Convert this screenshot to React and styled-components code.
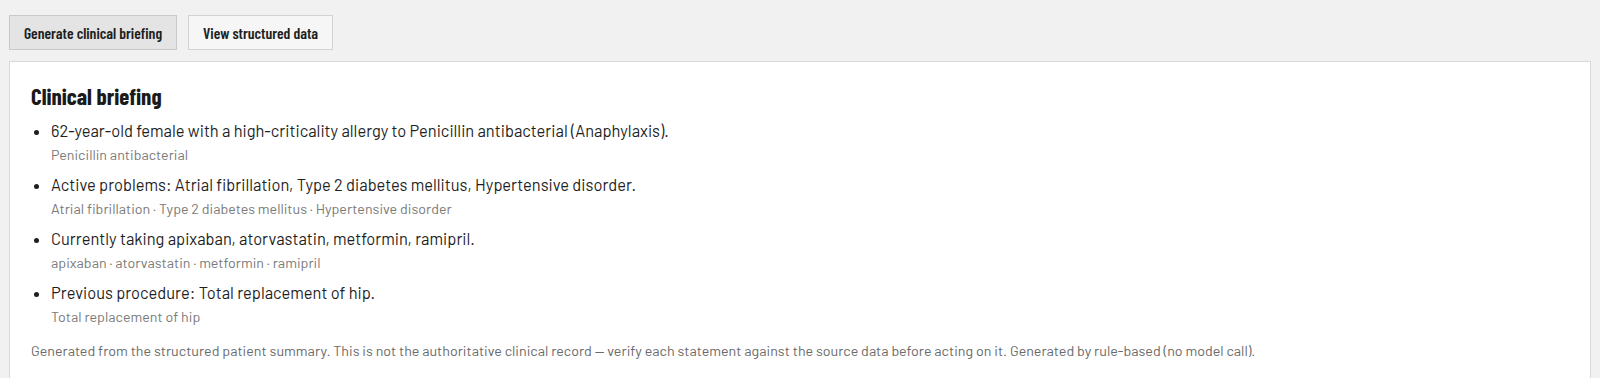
import React from "react";
import styled, { createGlobalStyle } from "styled-components";

const GlobalStyle = createGlobalStyle`
  html, body { margin: 0; padding: 0; background: #f1f1f1; }
  body { font-family: Barlow, "Liberation Sans", sans-serif; color: #1f1f1f; }
`;

const Page = styled.div`
  padding: 15px 9px 0;
  display: flex;
  flex-direction: column;
  gap: 11px;
`;

const Toolbar = styled.div`
  display: flex;
  gap: 11px;
`;

const Button = styled.button`
  height: 35px;
  padding: 0 14px;
  font-family: "Barlow Condensed", Barlow, sans-serif;
  font-weight: 600;
  font-size: 15.5px;
  color: #1e1e1e;
  background: ${p => (p.$active ? "#e4e4e4" : "#f6f6f6")};
  border: 1px solid ${p => (p.$active ? "#c9c9c9" : "#d3d3d3")};
  border-radius: 0;
  cursor: pointer;
`;

const Panel = styled.section`
  background: #fff;
  border: 1px solid #d9d9d9;
  padding: 20px 21px 20px;
`;

const Heading = styled.h2`
  margin: 0 0 9px;
  font-family: "Barlow Condensed", Barlow, sans-serif;
  font-weight: 700;
  font-size: 23px;
  line-height: 28px;
  color: #1a1a1a;
`;

const List = styled.ul`
  margin: 0;
  padding: 0 0 0 20px;
  list-style: disc;
`;

const Item = styled.li`
  margin-bottom: 8px;
  &:last-child { margin-bottom: 0; }
`;

const Statement = styled.div`
  font-size: 16.45px;
  line-height: 24px;
  color: #1f1f1f;
`;

const Sources = styled.div`
  margin-top: 2px;
  font-size: 14.25px;
  line-height: 20px;
  color: #7a7a7a;
`;

const Footnote = styled.p`
  margin: 14px 0 0;
  font-size: 14.25px;
  line-height: 20px;
  color: #6a6a6a;
`;

const items = [
  {
    text: "62-year-old female with a high-criticality allergy to Penicillin antibacterial (Anaphylaxis).",
    sources: ["Penicillin antibacterial"],
  },
  {
    text: "Active problems: Atrial fibrillation, Type 2 diabetes mellitus, Hypertensive disorder.",
    sources: ["Atrial fibrillation", "Type 2 diabetes mellitus", "Hypertensive disorder"],
  },
  {
    text: "Currently taking apixaban, atorvastatin, metformin, ramipril.",
    sources: ["apixaban", "atorvastatin", "metformin", "ramipril"],
  },
  {
    text: "Previous procedure: Total replacement of hip.",
    sources: ["Total replacement of hip"],
  },
];

export default function App() {
  return (
    <>
      <GlobalStyle />
      <Page>
        <Toolbar>
          <Button $active>Generate clinical briefing</Button>
          <Button>View structured data</Button>
        </Toolbar>
        <Panel>
          <Heading>Clinical briefing</Heading>
          <List>
            {items.map((it, i) => (
              <Item key={i}>
                <Statement>{it.text}</Statement>
                <Sources>{it.sources.join(" · ")}</Sources>
              </Item>
            ))}
          </List>
          <Footnote>
            Generated from the structured patient summary. This is not the authoritative clinical record — verify each
            statement against the source data before acting on it. Generated by rule-based (no model call).
          </Footnote>
        </Panel>
      </Page>
    </>
  );
}
